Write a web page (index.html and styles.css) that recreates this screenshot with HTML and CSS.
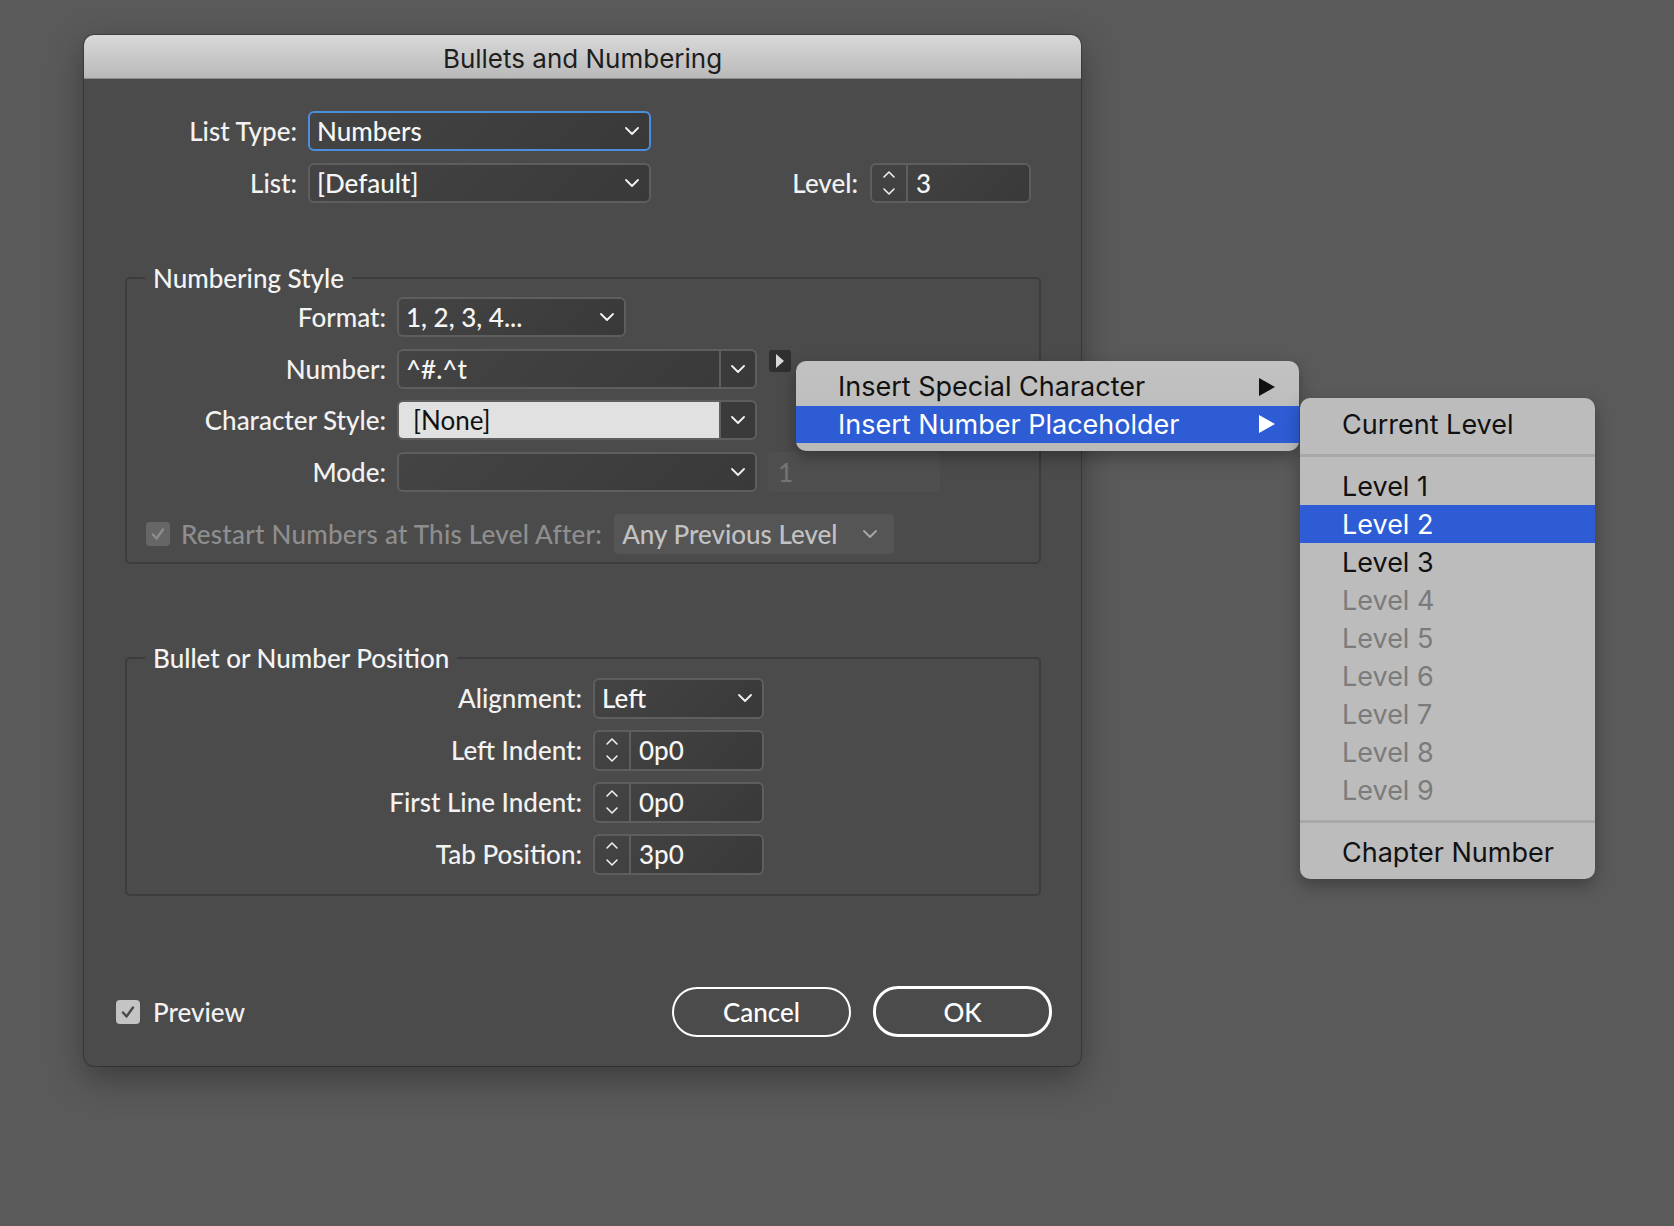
FILE: index.html
```html
<!DOCTYPE html>
<html lang="en">
<head>
    <meta charset="UTF-8">
    <title>Bullets and Numbering</title>
    <link rel="stylesheet" href="styles.css">
</head>
<body>
    <div class="desktop">
        <div class="dialog">
            <div class="titlebar">Bullets and Numbering</div>
            <div class="dialog-body">

                <div class="top-rows">
                    <div class="row">
                        <span class="lbl">List Type:</span>
                        <div class="field select focus list-select">
                            <span>Numbers</span>
                            <svg class="chev" viewBox="0 0 14 8"><path d="M1 1l6 6 6-6"/></svg>
                        </div>
                    </div>
                    <div class="row">
                        <span class="lbl">List:</span>
                        <div class="field select list-select">
                            <span>[Default]</span>
                            <svg class="chev" viewBox="0 0 14 8"><path d="M1 1l6 6 6-6"/></svg>
                        </div>
                        <div class="level">
                            <span class="lbl-plain">Level:</span>
                            <div class="field spin level-spin">
                                <div class="spin-arrows"><svg viewBox="0 0 14 30"><path d="M2 9l5-5 5 5M2 21l5 5 5-5"/></svg></div>
                                <span class="spin-val">3</span>
                            </div>
                        </div>
                    </div>
                </div>

                <!-- numbering style -->
                <fieldset class="group group-style">
                    <legend>Numbering Style</legend>
                    <div class="group-rows">
                        <div class="row">
                            <span class="lbl">Format:</span>
                            <div class="field select format-select">
                                <span>1, 2, 3, 4...</span>
                                <svg class="chev" viewBox="0 0 14 8"><path d="M1 1l6 6 6-6"/></svg>
                            </div>
                        </div>
                        <div class="row">
                            <span class="lbl">Number:</span>
                            <div class="field combo">
                                <span class="combo-text">^#.^t</span>
                                <span class="combo-btn"><svg class="chev" viewBox="0 0 14 8"><path d="M1 1l6 6 6-6"/></svg></span>
                            </div>
                            <span class="flyout-btn"><svg viewBox="0 0 10 16"><path d="M1 1l8 7-8 7z"/></svg></span>
                        </div>
                        <div class="row">
                            <span class="lbl">Character Style:</span>
                            <div class="field combo">
                                <span class="combo-text light">[None]</span>
                                <span class="combo-btn"><svg class="chev" viewBox="0 0 14 8"><path d="M1 1l6 6 6-6"/></svg></span>
                            </div>
                        </div>
                        <div class="row">
                            <span class="lbl">Mode:</span>
                            <div class="field select mode-select">
                                <span></span>
                                <svg class="chev" viewBox="0 0 14 8"><path d="M1 1l6 6 6-6"/></svg>
                            </div>
                            <div class="field-off start-at">1</div>
                        </div>
                    </div>
                    <div class="restart-row">
                        <span class="check check-off"><svg viewBox="0 0 20 20"><path d="M5 10.5l3.5 4 6.5-9"/></svg></span>
                        <span class="restart-text">Restart Numbers at This Level After:</span>
                        <div class="select-off">
                            <span>Any Previous Level</span>
                            <svg class="chev" viewBox="0 0 14 8"><path d="M1 1l6 6 6-6"/></svg>
                        </div>
                    </div>
                </fieldset>

                <!-- position -->
                <fieldset class="group group-pos">
                    <legend>Bullet or Number Position</legend>
                    <div class="group-rows">
                        <div class="row">
                            <span class="lbl">Alignment:</span>
                            <div class="field select pos-field">
                                <span>Left</span>
                                <svg class="chev" viewBox="0 0 14 8"><path d="M1 1l6 6 6-6"/></svg>
                            </div>
                        </div>
                        <div class="row">
                            <span class="lbl">Left Indent:</span>
                            <div class="field spin pos-field">
                                <div class="spin-arrows"><svg viewBox="0 0 14 30"><path d="M2 9l5-5 5 5M2 21l5 5 5-5"/></svg></div>
                                <span class="spin-val">0p0</span>
                            </div>
                        </div>
                        <div class="row">
                            <span class="lbl">First Line Indent:</span>
                            <div class="field spin pos-field">
                                <div class="spin-arrows"><svg viewBox="0 0 14 30"><path d="M2 9l5-5 5 5M2 21l5 5 5-5"/></svg></div>
                                <span class="spin-val">0p0</span>
                            </div>
                        </div>
                        <div class="row">
                            <span class="lbl">Tab Position:</span>
                            <div class="field spin pos-field">
                                <div class="spin-arrows"><svg viewBox="0 0 14 30"><path d="M2 9l5-5 5 5M2 21l5 5 5-5"/></svg></div>
                                <span class="spin-val">3p0</span>
                            </div>
                        </div>
                    </div>
                </fieldset>

                <div class="footer">
                    <span class="check check-on"><svg viewBox="0 0 20 20"><path d="M5 10.5l3.5 4 6.5-9"/></svg></span>
                    <span class="preview-text">Preview</span>
                    <button class="btn btn-cancel">Cancel</button>
                    <button class="btn btn-ok">OK</button>
                </div>
            </div>
        </div>

        <!-- popup menus -->
        <div class="menu menu-insert">
            <div class="menu-item">Insert Special Character<svg class="sub-arrow" viewBox="0 0 16 18"><path d="M0 0l16 9-16 9z"/></svg></div>
            <div class="menu-item active">Insert Number Placeholder<svg class="sub-arrow" viewBox="0 0 16 18"><path d="M0 0l16 9-16 9z"/></svg></div>
        </div>
        <div class="menu menu-levels">
            <div class="menu-item">Current Level</div>
            <div class="menu-sep"></div>
            <div class="menu-item">Level 1</div>
            <div class="menu-item active">Level 2</div>
            <div class="menu-item">Level 3</div>
            <div class="menu-item disabled">Level 4</div>
            <div class="menu-item disabled">Level 5</div>
            <div class="menu-item disabled">Level 6</div>
            <div class="menu-item disabled">Level 7</div>
            <div class="menu-item disabled">Level 8</div>
            <div class="menu-item disabled">Level 9</div>
            <div class="menu-sep"></div>
            <div class="menu-item">Chapter Number</div>
        </div>
    </div>
</body>
</html>
```

FILE: styles.css
```css
body,html{
    margin: 0;
    padding: 0;
}
body{
    background: #5a5a5a;
    font-family: Lato, "Open Sans", sans-serif;
}
.desktop{
    position: relative;
    width: 1674px;
    height: 1226px;
    padding: 35px 0 0 84px;
    box-sizing: border-box;
    overflow: hidden;
}

/* dialog window */
.dialog{
    width: 997px;
    height: 1031px;
    background: #4b4b4b;
    border-radius: 10px;
    box-shadow: 0 12px 34px rgba(0,0,0,.35), 0 0 0 1px rgba(0,0,0,.25);
    overflow: hidden;
    display: flex;
    flex-direction: column;
}
.titlebar{
    height: 44px;
    box-sizing: border-box;
    background: linear-gradient(#d9d9d9, #b9b9b9);
    border-bottom: 1px solid #8c8c8c;
    text-align: center;
    line-height: 47px;
    font-family: Inter, "Liberation Sans", sans-serif;
    font-size: 26px;
    color: #1e1e1e;
}
.dialog-body{
    flex: 1;
    padding: 32px 40px 29px 41px;
    display: flex;
    flex-direction: column;
    color: #f2f2f2;
    font-size: 26px;
    font-weight: 500;
}

.row{
    display: flex;
    align-items: center;
    gap: 11px;
    height: 40px;
}
.lbl{
    flex: none;
    text-align: right;
}
.top-rows{
    display: flex;
    flex-direction: column;
    gap: 12px;
}
.top-rows .lbl{
    width: 172px;
}

/* fields */
.field{
    box-sizing: border-box;
    height: 40px;
    border: 2px solid #5e5e5e;
    border-radius: 6px;
    background: linear-gradient(135deg, #444 0%, #393939 100%);
    display: flex;
    align-items: center;
    color: #f6f6f6;
    flex: none;
}
.select{
    padding: 0 10px 0 7px;
}
.select .chev{
    margin-left: auto;
}
.chev{
    width: 14px;
    height: 8px;
    fill: none;
    stroke: #f2f2f2;
    stroke-width: 1.8;
    stroke-linecap: round;
    stroke-linejoin: round;
}
.focus{
    border-color: #4d8ddd;
}
.list-select{
    width: 343px;
}
.level{
    margin-left: auto;
    margin-right: 10px;
    display: flex;
    align-items: center;
    gap: 12px;
}
.spin{
    padding: 0;
}
.level-spin{
    width: 161px;
}
.spin-arrows{
    width: 34px;
    height: 100%;
    border-right: 2px solid #5e5e5e;
    display: flex;
    align-items: center;
    justify-content: center;
}
.spin-arrows svg{
    width: 14px;
    height: 30px;
    fill: none;
    stroke: #eee;
    stroke-width: 1.6;
    stroke-linecap: round;
    stroke-linejoin: round;
}
.spin-val{
    padding-left: 8px;
}

/* groups */
.group{
    margin: 0;
    padding: 0 0 8px 0;
    border: 2px solid #3c3c3c;
    border-radius: 5px;
    min-width: 0;
}
.group legend{
    margin-left: 18px;
    padding: 0 8px;
    line-height: 34px;
    color: #f4f4f4;
}
.group-style{
    margin-top: 58px;
}
.group-pos{
    margin-top: 77px;
    padding-bottom: 19px;
}
.group-rows{
    display: flex;
    flex-direction: column;
    gap: 11.5px;
    padding-top: 2px;
}
.group-style .lbl{
    width: 259px;
}
.format-select{
    width: 229px;
}
.combo{
    width: 360px;
    overflow: hidden;
}
.combo-text{
    flex: 1;
    height: 100%;
    display: flex;
    align-items: center;
    padding-left: 7px;
}
.combo-text.light{
    background: #e1e1e1;
    color: #111;
    padding-left: 14px;
    font-weight: 400;
}
.combo-btn{
    width: 34px;
    height: 100%;
    border-left: 2px solid #5e5e5e;
    display: flex;
    align-items: center;
    justify-content: center;
}
.flyout-btn{
    align-self: flex-start;
    margin: 1px 0 0 1px;
    width: 22px;
    height: 22px;
    border-radius: 3px;
    background: #2f2f2f;
    display: flex;
    align-items: center;
    justify-content: center;
}
.flyout-btn svg{
    width: 10px;
    height: 16px;
    fill: #d8d8d8;
}
.mode-select{
    width: 360px;
}
.field-off{
    width: 172px;
    height: 40px;
    box-sizing: border-box;
    background: #4f4f4f;
    border-radius: 4px;
    color: #747474;
    padding-left: 10px;
    display: flex;
    align-items: center;
}
.restart-row{
    display: flex;
    align-items: center;
    gap: 11px;
    margin-top: 22px;
    padding-left: 19px;
}
.restart-text{
    color: #8e8e8e;
    letter-spacing: 0.25px;
}
.select-off{
    margin-left: 1px;
    width: 280px;
    height: 40px;
    box-sizing: border-box;
    background: #555;
    border-radius: 4px;
    color: #c2c2c2;
    display: flex;
    align-items: center;
    padding: 0 17px 0 8px;
}
.select-off .chev{
    margin-left: auto;
    stroke: #a8a8a8;
}
.group-pos .row{
    height: 41px;
}
.group-pos .lbl{
    width: 455px;
}
.group-pos .group-rows{
    padding-top: 3px;
    gap: 11px;
}
.pos-field{
    width: 171px;
    height: 41px;
}

/* checkboxes */
.check{
    width: 24px;
    height: 24px;
    border-radius: 4px;
    display: flex;
    align-items: center;
    justify-content: center;
    flex: none;
}
.check svg{
    width: 20px;
    height: 20px;
    fill: none;
    stroke-width: 2.4;
    stroke-linecap: round;
    stroke-linejoin: round;
}
.check-off{
    background: #666;
}
.check-off svg{
    stroke: #8c8c8c;
}
.check-on{
    background: #c4c4c4;
}
.check-on svg{
    stroke: #4a4a4a;
}

/* footer */
.footer{
    margin: auto -11px 0 -9px;
    display: flex;
    align-items: center;
    height: 51px;
}
.preview-text{
    margin-left: 13px;
}
.btn{
    box-sizing: border-box;
    width: 179px;
    height: 50px;
    border: 2px solid #fff;
    border-radius: 25px;
    background: transparent;
    color: #fff;
    font-family: Lato, "Open Sans", sans-serif;
    font-size: 26px;
    font-weight: 500;
    padding: 0;
}
.btn-cancel{
    margin-left: auto;
}
.btn-ok{
    margin-left: 22px;
    height: 51px;
    border-width: 3px;
}

/* menus */
.menu{
    position: absolute;
    background: #bcbcbc;
    border-radius: 10px;
    padding: 7px 0 8px;
    box-shadow: 0 6px 16px rgba(0,0,0,.3);
    font-family: Inter, "Liberation Sans", sans-serif;
    font-size: 27px;
    color: #111;
}
.menu-insert{
    left: 796px;
    top: 361px;
    width: 503px;
    background: linear-gradient(#c2c2c2, #b9b9b9);
}
.menu-levels{
    left: 1300px;
    top: 398px;
    width: 295px;
}
.menu-item{
    height: 38px;
    padding-left: 42px;
    display: flex;
    align-items: center;
}
.menu-insert .menu-item{
    height: 37.5px;
}
.menu-item.active{
    background: #2d5cd4;
    color: #fff;
}
.menu-item.disabled{
    color: #7b7b7b;
}
.sub-arrow{
    margin-left: auto;
    margin-right: 24px;
    width: 16px;
    height: 18px;
    fill: #111;
}
.active .sub-arrow{
    fill: #fff;
}
.menu-sep{
    height: 24px;
    display: flex;
    align-items: center;
}
.menu-sep::before{
    content: "";
    flex: 1;
    height: 3px;
    background: #a8a8a8;
}
```
